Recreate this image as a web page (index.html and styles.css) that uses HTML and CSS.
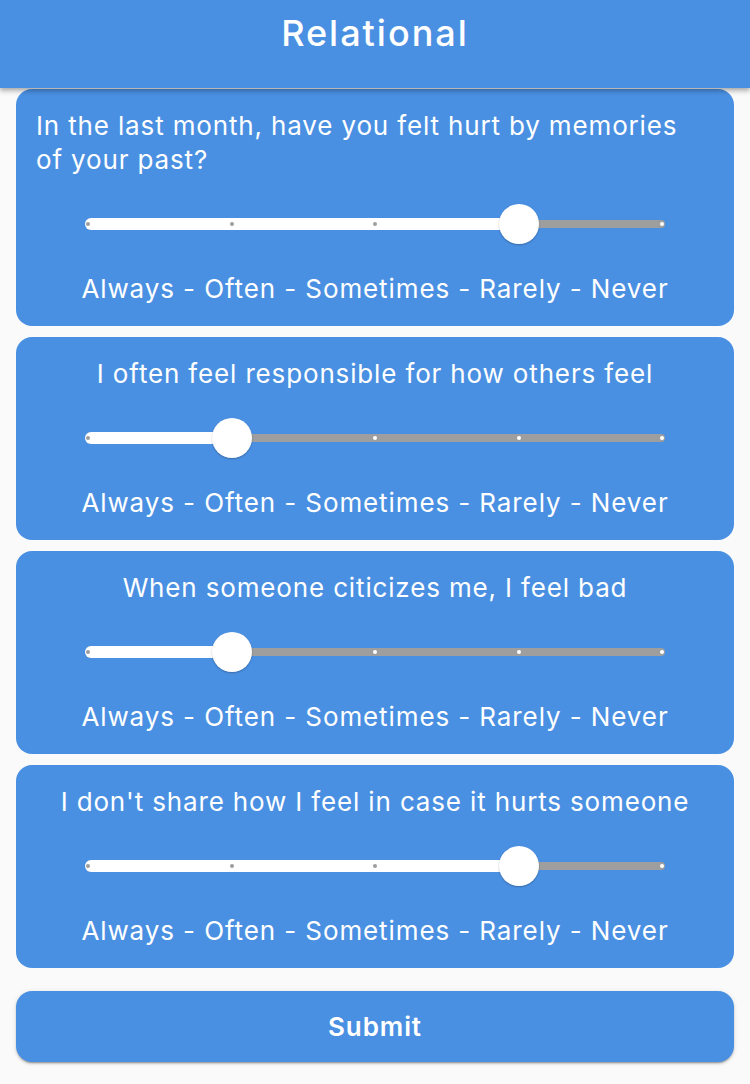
FILE: index.html
```html
<!DOCTYPE html>
<html lang="en">
<head>
<meta charset="utf-8">
<title>Relational</title>
<link rel="stylesheet" href="styles.css">
</head>
<body>
<header class="appbar"><h1 class="title">Relational</h1></header>
<main class="list">
  <section class="card">
    <p class="question question-left">In the last month, have you felt hurt by memories of your past?</p>
    <div class="slider" style="--v:3">
      <div class="track"><div class="active"></div><div class="inactive"></div></div>
      <div class="ticks"><span class="tick on"></span><span class="tick on"></span><span class="tick on"></span><span class="tick on"></span><span class="tick off"></span></div>
      <div class="thumb"></div>
    </div>
    <p class="scale">Always - Often - Sometimes - Rarely - Never</p>
  </section>
  <section class="card">
    <p class="question">I often feel responsible for how others feel</p>
    <div class="slider" style="--v:1">
      <div class="track"><div class="active"></div><div class="inactive"></div></div>
      <div class="ticks"><span class="tick on"></span><span class="tick on"></span><span class="tick off"></span><span class="tick off"></span><span class="tick off"></span></div>
      <div class="thumb"></div>
    </div>
    <p class="scale">Always - Often - Sometimes - Rarely - Never</p>
  </section>
  <section class="card">
    <p class="question">When someone citicizes me, I feel bad</p>
    <div class="slider" style="--v:1">
      <div class="track"><div class="active"></div><div class="inactive"></div></div>
      <div class="ticks"><span class="tick on"></span><span class="tick on"></span><span class="tick off"></span><span class="tick off"></span><span class="tick off"></span></div>
      <div class="thumb"></div>
    </div>
    <p class="scale">Always - Often - Sometimes - Rarely - Never</p>
  </section>
  <section class="card">
    <p class="question">I don't share how I feel in case it hurts someone</p>
    <div class="slider" style="--v:3">
      <div class="track"><div class="active"></div><div class="inactive"></div></div>
      <div class="ticks"><span class="tick on"></span><span class="tick on"></span><span class="tick on"></span><span class="tick on"></span><span class="tick off"></span></div>
      <div class="thumb"></div>
    </div>
    <p class="scale">Always - Often - Sometimes - Rarely - Never</p>
  </section>
  <button class="submit" type="button">Submit</button>
</main>
</body>
</html>
```
FILE: styles.css
```css
* { box-sizing: border-box; }
html, body { margin: 0; padding: 0; }
body {
  background: #fafafa;
  font-family: Inter, "Noto Sans", "Liberation Sans", sans-serif;
  color: #fff;
  width: 750px;
  overflow: hidden;
}
.appbar {
  height: 88px;
  background: #4a90e2;
  display: flex;
  justify-content: center;
  box-shadow: 0 2px 4px rgba(0,0,0,0.2), 0 4px 5px rgba(0,0,0,0.14);
  position: relative;
  z-index: 2;
}
.title {
  margin: 0;
  padding-top: 11px;
  font-size: 36px;
  line-height: 44px;
  font-weight: 500;
  letter-spacing: 2px;
}
.list {
  display: flex;
  flex-direction: column;
  gap: 11px;
  padding: 1px 16px 20px;
}
.card {
  background: #4a90e2;
  border-radius: 16px;
  padding: 20px 20px 20px;
  display: flex;
  flex-direction: column;
}
.question {
  margin: 0;
  font-size: 26px;
  line-height: 34px;
  letter-spacing: 0.85px;
  text-align: center;
}
.question-left {
  text-align: left;
  padding-right: 24px;
}
.scale {
  margin: 0;
  font-size: 26px;
  line-height: 34px;
  letter-spacing: 0.9px;
  text-align: center;
}
.slider {
  position: relative;
  height: 95px;
  margin: 0 49px;
  --pos: calc(3px + var(--v) * (100% - 6px) / 4);
}
.track {
  position: absolute;
  left: 0;
  right: 0;
  top: 41px;
  height: 12px;
  display: flex;
  align-items: center;
}
.active {
  width: var(--pos);
  height: 12px;
  background: #fff;
  border-radius: 6px 0 0 6px;
}
.inactive {
  flex: 1;
  height: 8px;
  background: #9e9e9e;
  border-radius: 0 4px 4px 0;
}
.ticks {
  position: absolute;
  left: 1px;
  right: 1px;
  top: 45px;
  height: 4px;
  display: flex;
  justify-content: space-between;
}
.tick {
  width: 4px;
  height: 4px;
  border-radius: 50%;
}
.tick.on { background: #9e9e9e; }
.tick.off { background: #fff; }
.thumb {
  position: absolute;
  top: 47px;
  left: var(--pos);
  width: 40px;
  height: 40px;
  margin: -20px 0 0 -20px;
  border-radius: 50%;
  background: #fff;
  box-shadow: 0 1px 2px rgba(0,0,0,0.25);
}
.submit {
  margin-top: 12px;
  height: 71px;
  border: 0;
  border-radius: 16px;
  background: #4a90e2;
  color: #fff;
  font-family: Inter, "Noto Sans", "Liberation Sans", sans-serif;
  font-size: 26px;
  font-weight: 600;
  letter-spacing: 0.9px;
  box-shadow: 0 3px 1px -2px rgba(0,0,0,0.2), 0 2px 2px rgba(0,0,0,0.14), 0 1px 5px rgba(0,0,0,0.12);
}
```
